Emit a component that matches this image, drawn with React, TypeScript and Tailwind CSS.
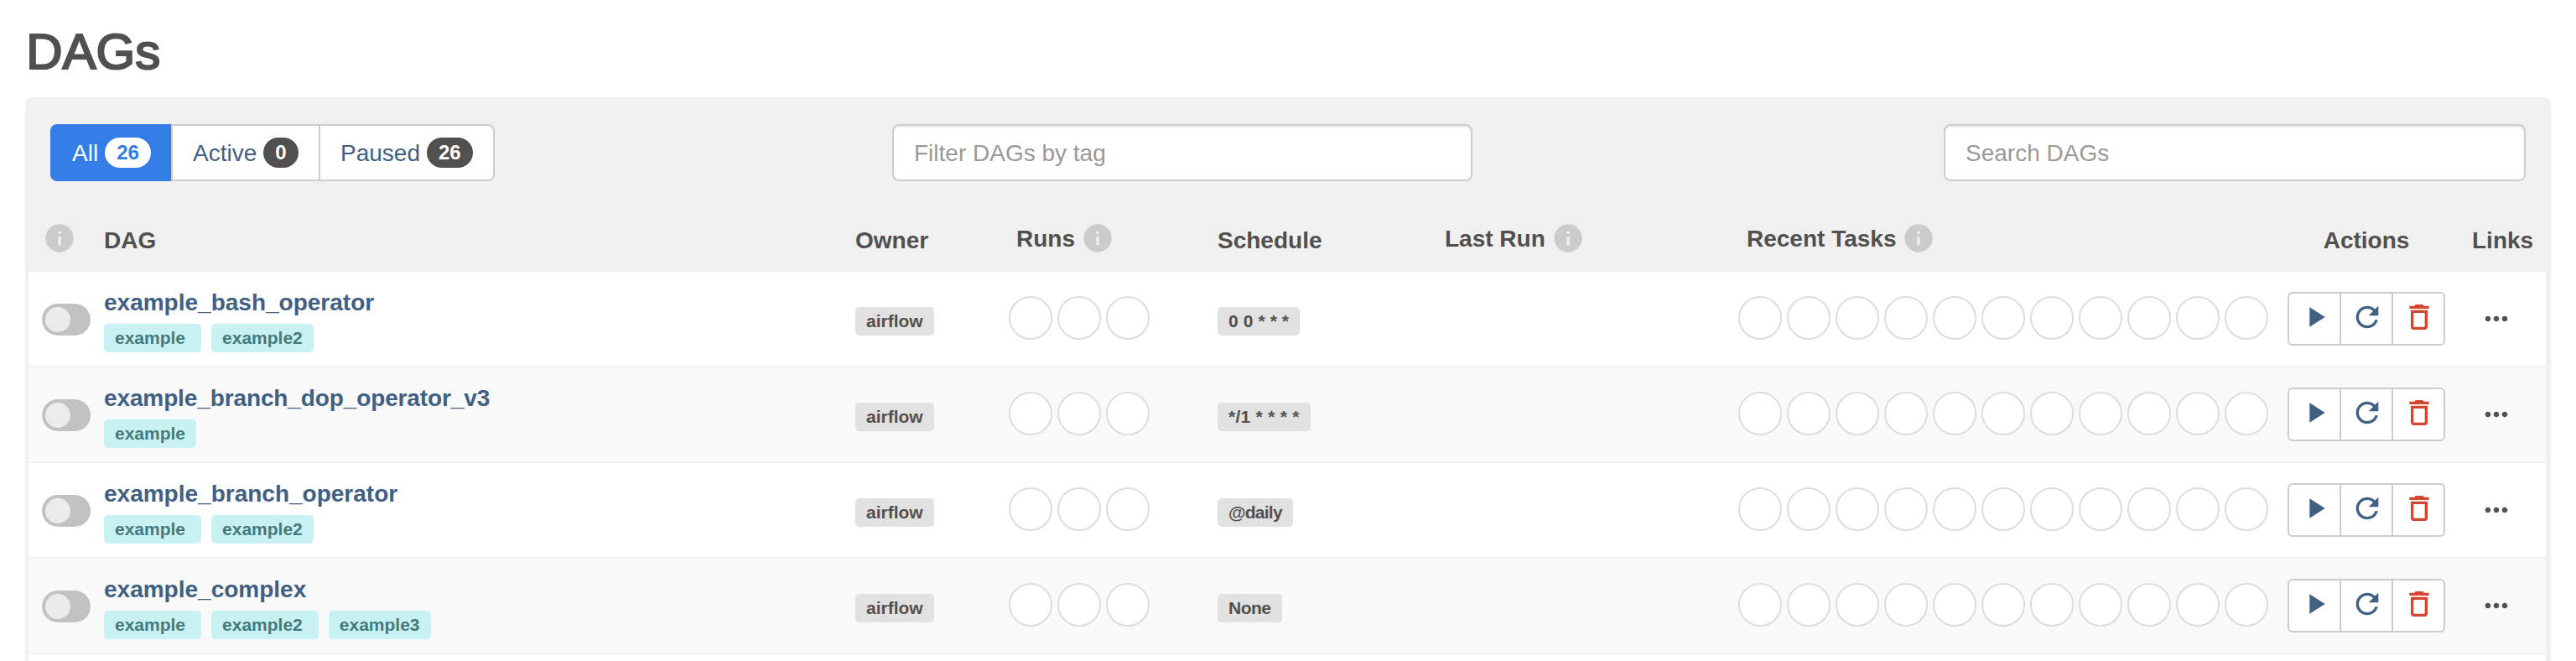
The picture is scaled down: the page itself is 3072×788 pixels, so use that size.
import type { ReactNode } from 'react';

const GRID =
  'grid grid-cols-[90px_896px_183px_249px_271px_350px_655px_188px_114px]';

const ICONS = {
  info: 'M12 2C6.48 2 2 6.48 2 12s4.48 10 10 10 10-4.48 10-10S17.52 2 12 2zm1 15h-2v-6h2v6zm0-8h-2V7h2v2z',
  play: 'M8 5v14l11-7z',
  refresh:
    'M17.65 6.35A7.958 7.958 0 0 0 12 4c-4.42 0-7.99 3.58-7.99 8s3.57 8 7.99 8c3.73 0 6.84-2.55 7.73-6h-2.08A5.99 5.99 0 0 1 12 18c-3.31 0-6-2.69-6-6s2.69-6 6-6c1.66 0 3.14.69 4.22 1.78L13 11h7V4l-2.35 2.35z',
  trash:
    'M6 19c0 1.1.9 2 2 2h8c1.1 0 2-.9 2-2V7H6v12zM8 9h8v10H8V9zm7.5-5l-1-1h-5l-1 1H5v2h14V4z',
  more: 'M6 10c-1.1 0-2 .9-2 2s.9 2 2 2 2-.9 2-2-.9-2-2-2zm12 0c-1.1 0-2 .9-2 2s.9 2 2 2 2-.9 2-2-.9-2-2-2zm-6 0c-1.1 0-2 .9-2 2s.9 2 2 2 2-.9 2-2-.9-2-2-2z',
};

function Icon({ name, className }: { name: keyof typeof ICONS; className: string }) {
  return (
    <svg viewBox="0 0 24 24" fill="currentColor" className={`size-10 shrink-0 ${className}`}>
      <path d={ICONS[name]} />
    </svg>
  );
}

function Circles({ count }: { count: number }) {
  return (
    <div className="mt-[29px] flex gap-1.5">
      {Array.from({ length: count }, (_, i) => (
        <span key={i} className="size-[52px] rounded-full border-2 border-[#dddddd] bg-white" />
      ))}
    </div>
  );
}

function Label({ children, className }: { children: ReactNode; className: string }) {
  return (
    <span
      className={`mt-[42px] flex h-[34px] w-max items-center rounded-[5px] bg-[#e1e1e1] px-[13px] pb-0.5 text-[21px] leading-none font-bold whitespace-pre ${className}`}
    >
      {children}
    </span>
  );
}

function HeadWithInfo({ text, className }: { text: string; className: string }) {
  return (
    <div className={`flex gap-[7px] ${className}`}>
      <span className="-mt-0.5">{text}</span>
      <Icon name="info" className="-mt-[3px] text-[#cbcbcb]" />
    </div>
  );
}

const dags = [
  { name: 'example_bash_operator', tags: ['example', 'example2'], schedule: '0 0 * * *', fit: 'tracking-[0.1px]', nameFit: '' },
  { name: 'example_branch_dop_operator_v3', tags: ['example'], schedule: '*/1 * * * *', fit: 'tracking-[0.27px]', nameFit: 'tracking-[-0.12px]' },
  { name: 'example_branch_operator', tags: ['example', 'example2'], schedule: '@daily', fit: 'tracking-[-0.75px]', nameFit: '' },
  { name: 'example_complex', tags: ['example', 'example2', 'example3'], schedule: 'None', fit: 'tracking-[-0.5px]', nameFit: '' },
];

export default function App() {
  return (
    <div className="h-[788px] w-[3072px] overflow-hidden bg-white pl-[30px] font-['Liberation_Sans',Arial,sans-serif] text-[28px] leading-10 text-[#51504f]">
      <div className="h-[116px] pt-[29px] pl-[1.2px]">
        <h1 className="text-[60px] leading-[66px] [-webkit-text-stroke:2.2px_#51504f]">DAGs</h1>
      </div>
      <main className="w-[3012px] rounded-t-lg bg-[#f0f0f0] pr-1.5 pl-1">
        <div className="flex h-[148px] pt-8 pl-[26px]">
          <nav className="flex h-[68px] w-[530px] text-[#406083]">
            <a className="flex w-36 items-center gap-2 rounded-l-lg bg-[#347de7] pl-[26px] text-white">
              <span className="pt-0.5">All</span>
              <span className="rounded-full bg-white px-3.5 py-1.5 text-2xl leading-6 font-bold text-[#347de7]">26</span>
            </a>
            <a className="flex w-[178px] items-center gap-2 border-2 border-[#cccccc] bg-white pl-6">
              <span className="pt-0.5">Active</span>
              <span className="rounded-full bg-[#51504f] px-3.5 py-1.5 text-2xl leading-6 font-bold text-white">0</span>
            </a>
            <a className="flex w-52 items-center gap-2 rounded-r-lg border-2 border-l-0 border-[#cccccc] bg-white pl-6">
              <span className="pt-0.5">Paused</span>
              <span className="rounded-full bg-[#51504f] px-3.5 py-1.5 text-2xl leading-6 font-bold text-white">26</span>
            </a>
          </nav>
          <input
            placeholder="Filter DAGs by tag"
            className="ml-[474px] h-[68px] w-[692px] rounded-lg border-2 border-[#cccccc] bg-white px-6 pt-0.5 shadow-[inset_0_2px_2px_rgba(0,0,0,0.075)] placeholder:text-[#999999]"
          />
          <input
            placeholder="Search DAGs"
            className="ml-[562px] h-[68px] w-[694px] rounded-lg border-2 border-[#cccccc] bg-white px-6 pt-0.5 shadow-[inset_0_2px_2px_rgba(0,0,0,0.075)] placeholder:text-[#999999]"
          />
        </div>
        <div className={`${GRID} h-[60px] pt-[3px] font-bold`}>
          <Icon name="info" className="-mt-[3px] ml-[17px] text-[#cbcbcb]" />
          <span>DAG</span>
          <span>Owner</span>
          <HeadWithInfo text="Runs" className="pl-[9px]" />
          <span>Schedule</span>
          <HeadWithInfo text="Last Run" className="" />
          <HeadWithInfo text="Recent Tasks" className="pl-2.5" />
          <span className="text-center">Actions</span>
          <span className="pl-8">Links</span>
        </div>
        {dags.map((dag, i) => (
          <div
            key={dag.name}
            className={`${GRID} h-[114px] border-b-2 border-[#f0f0f0] ${i % 2 ? 'bg-[#f9f9f9]' : 'bg-white'}`}
          >
            <div className="mt-[38px] ml-4 h-[38px] w-[58px] rounded-full bg-[#c4c2c1] p-1">
              <div className="size-[30px] rounded-full bg-[#ebebeb]" />
            </div>
            <div className="pt-[17px]">
              <a className={`block font-bold text-[#406083] ${dag.nameFit}`}>{dag.name}</a>
              <div className="mt-[5px] flex gap-3">
                {dag.tags.map((tag, t) => (
                  <a
                    key={tag}
                    className={`flex h-[34px] items-center rounded-[5px] bg-[#c8f1f3] pb-0.5 pl-[13px] text-[21px] leading-none font-bold text-[#457a7c] ${t < dag.tags.length - 1 ? 'pr-[19px]' : 'pr-[13px]'}`}
                  >
                    {tag}
                  </a>
                ))}
              </div>
            </div>
            <Label className="">airflow</Label>
            <Circles count={3} />
            <Label className={dag.fit}>{dag.schedule}</Label>
            <div />
            <Circles count={11} />
            <div className="mt-6 flex h-16 w-[188px] rounded-md border-2 border-[#cccccc] bg-white">
              <a className="flex w-[62px] border-r-2 border-[#cccccc] pt-2 pl-[10.7px] text-[#406083]">
                <Icon name="play" className="" />
              </a>
              <a className="flex w-[62px] border-r-2 border-[#cccccc] pt-2 pl-[10.7px] text-[#406083]">
                <Icon name="refresh" className="" />
              </a>
              <a className="flex w-[60px] pt-2 pl-[10.7px] text-[#d5452c]">
                <Icon name="trash" className="" />
              </a>
            </div>
            <Icon name="more" className="mt-9 ml-[40.7px]" />
          </div>
        ))}
        <div className="h-2 bg-white" />
      </main>
    </div>
  );
}
